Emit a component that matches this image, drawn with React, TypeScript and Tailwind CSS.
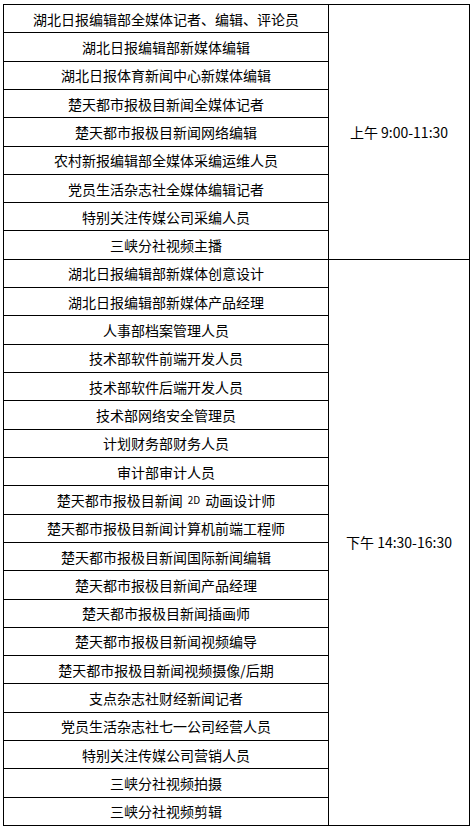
import React from "react";

const top = [
  "湖北日报编辑部全媒体记者、编辑、评论员",
  "湖北日报编辑部新媒体编辑",
  "湖北日报体育新闻中心新媒体编辑",
  "楚天都市报极目新闻全媒体记者",
  "楚天都市报极目新闻网络编辑",
  "农村新报编辑部全媒体采编运维人员",
  "党员生活杂志社全媒体编辑记者",
  "特别关注传媒公司采编人员",
  "三峡分社视频主播",
];

const bottom: React.ReactNode[] = [
  "湖北日报编辑部新媒体创意设计",
  "湖北日报编辑部新媒体产品经理",
  "人事部档案管理人员",
  "技术部软件前端开发人员",
  "技术部软件后端开发人员",
  "技术部网络安全管理员",
  "计划财务部财务人员",
  "审计部审计人员",
  <>
    楚天都市报极目新闻<span className="text-[10px] mx-[5px]">2D</span>动画设计师
  </>,
  "楚天都市报极目新闻计算机前端工程师",
  "楚天都市报极目新闻国际新闻编辑",
  "楚天都市报极目新闻产品经理",
  "楚天都市报极目新闻插画师",
  "楚天都市报极目新闻视频编导",
  "楚天都市报极目新闻视频摄像/后期",
  "支点杂志社财经新闻记者",
  "党员生活杂志社七一公司经营人员",
  "特别关注传媒公司营销人员",
  "三峡分社视频拍摄",
  "三峡分社视频剪辑",
];

export default function App() {
  return (
    <div className="w-[474px] h-[832px] bg-white pt-[4px] pl-[3px]">
      <div
        className="grid w-[467px] h-[822px] bg-black p-px gap-px grid-cols-[324px_140px] grid-rows-[repeat(29,minmax(0,1fr))] text-[14px] text-black leading-none"
        style={{ fontFamily: '"Noto Sans CJK SC", "Noto Sans", sans-serif' }}
      >
        <div className="col-start-2 row-start-1 row-span-9 bg-white flex items-center justify-center">
          上午 9:00-11:30
        </div>
        <div className="col-start-2 row-start-10 row-span-20 bg-white flex items-center justify-center">
          下午 14:30-16:30
        </div>
        {[...top, ...bottom].map((t, i) => (
          <div
            key={i}
            className="col-start-1 bg-white flex items-center justify-center whitespace-nowrap"
          >
            {t}
          </div>
        ))}
      </div>
    </div>
  );
}
